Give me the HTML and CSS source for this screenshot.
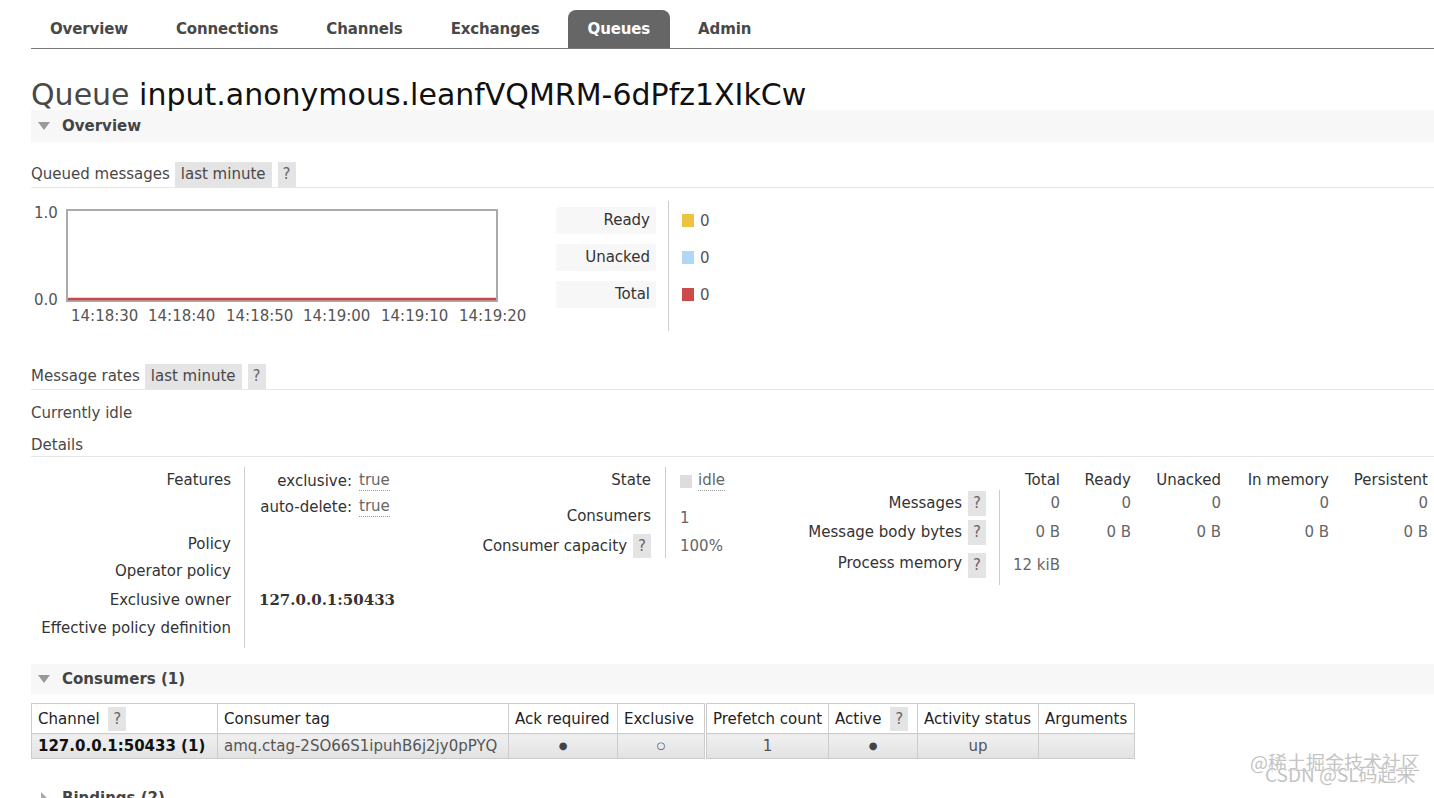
FILE: index.html
```html
<!DOCTYPE html>
<html>
<head>
<meta charset="utf-8">
<title>RabbitMQ Queue</title>
<link rel="stylesheet" href="styles.css">
</head>
<body>
<div class="page">
  <ul class="tabs">
    <li class="tab">Overview</li>
    <li class="tab">Connections</li>
    <li class="tab">Channels</li>
    <li class="tab">Exchanges</li>
    <li class="tab active">Queues</li>
    <li class="tab">Admin</li>
  </ul>

  <h1 class="title"><span class="title-kind">Queue</span> <span class="title-name">input.anonymous.leanfVQMRM-6dPfz1XIkCw</span></h1>

  <div class="section-h">
    <svg class="tri" width="12" height="8" viewBox="0 0 12 8"><polygon points="0,0 12,0 6,8" fill="#999"/></svg>
    <span>Overview</span>
  </div>

  <div class="subhead first">
    <span>Queued messages</span>
    <span class="badge">last minute</span>
    <span class="badge q">?</span>
  </div>

  <div class="chart-row">
    <svg class="chart" width="500" height="130" viewBox="0 0 500 130">
      <text x="3" y="17" class="ax">1.0</text>
      <text x="3" y="104" class="ax">0.0</text>
      <rect x="36" y="9" width="430" height="91" fill="#fff" stroke="#aaa" stroke-width="2"/>
      <line x1="37" y1="98" x2="465" y2="98" stroke="#c9484b" stroke-width="2.4"/>
      <text x="40" y="120" class="ax">14:18:30</text>
      <text x="117" y="120" class="ax">14:18:40</text>
      <text x="195" y="120" class="ax">14:18:50</text>
      <text x="272" y="120" class="ax">14:19:00</text>
      <text x="350" y="120" class="ax">14:19:10</text>
      <text x="428" y="120" class="ax">14:19:20</text>
    </svg>
    <div class="legend">
      <div class="legend-labels">
        <div class="legend-label">Ready</div>
        <div class="legend-label">Unacked</div>
        <div class="legend-label">Total</div>
      </div>
      <div class="legend-values">
        <div class="legend-value"><span class="swatch sw-ready"></span>0</div>
        <div class="legend-value"><span class="swatch sw-unacked"></span>0</div>
        <div class="legend-value"><span class="swatch sw-total"></span>0</div>
      </div>
    </div>
  </div>

  <div class="subhead rates">
    <span>Message rates</span>
    <span class="badge">last minute</span>
    <span class="badge q">?</span>
  </div>

  <div class="idle">Currently idle</div>
  <div class="details-h">Details</div>

  <div class="details">
    <div class="blk blk1">
      <div class="lbl r-feat">Features</div>
      <div class="val r-feat">
        <div class="feat"><span class="fk">exclusive:</span><span class="fv">true</span></div>
        <div class="feat second"><span class="fk">auto-delete:</span><span class="fv">true</span></div>
      </div>
      <div class="lbl r-pol">Policy</div>
      <div class="val r-pol"></div>
      <div class="lbl r-op">Operator policy</div>
      <div class="val r-op"></div>
      <div class="lbl r-own">Exclusive owner</div>
      <div class="val r-own"><span class="owner">127.0.0.1:50433</span></div>
      <div class="lbl r-eff">Effective policy definition</div>
      <div class="val r-eff"></div>
    </div>

    <div class="blk blk2">
      <div class="lbl s-state">State</div>
      <div class="val s-state"><span class="state-box"></span><span class="fv">idle</span></div>
      <div class="lbl s-cons">Consumers</div>
      <div class="val s-cons"><span class="num">1</span></div>
      <div class="lbl s-cap">Consumer capacity <span class="badge q">?</span></div>
      <div class="val s-cap"><span class="num">100%</span></div>
    </div>

    <div class="blk blk3">
      <div class="h3c"></div>
      <div class="h3c col">Total</div>
      <div class="h3c col">Ready</div>
      <div class="h3c col">Unacked</div>
      <div class="h3c col">In memory</div>
      <div class="h3c col">Persistent</div>

      <div class="lbl m-row">Messages <span class="badge q">?</span></div>
      <div class="cell m-row first-col">0</div>
      <div class="cell m-row">0</div>
      <div class="cell m-row">0</div>
      <div class="cell m-row">0</div>
      <div class="cell m-row">0</div>

      <div class="lbl b-row">Message body bytes <span class="badge q">?</span></div>
      <div class="cell b-row first-col">0 B</div>
      <div class="cell b-row">0 B</div>
      <div class="cell b-row">0 B</div>
      <div class="cell b-row">0 B</div>
      <div class="cell b-row">0 B</div>

      <div class="lbl p-row">Process memory <span class="badge q">?</span></div>
      <div class="cell p-row first-col">12 kiB</div>
      <div class="cell p-row"></div>
      <div class="cell p-row"></div>
      <div class="cell p-row"></div>
      <div class="cell p-row"></div>
    </div>
  </div>

  <div class="section-h cons-h">
    <svg class="tri" width="12" height="8" viewBox="0 0 12 8"><polygon points="0,0 12,0 6,8" fill="#999"/></svg>
    <span>Consumers (1)</span>
  </div>

  <table class="list">
    <thead>
      <tr>
        <th class="c-chan">Channel <span class="badge q">?</span></th>
        <th class="c-tag">Consumer tag</th>
        <th class="c-ack">Ack required</th>
        <th class="c-exc">Exclusive</th>
        <th class="c-pre group">Prefetch count</th>
        <th class="c-act">Active <span class="badge q">?</span></th>
        <th class="c-stat">Activity status</th>
        <th class="c-args">Arguments</th>
      </tr>
    </thead>
    <tbody>
      <tr>
        <td class="chan">127.0.0.1:50433 (1)</td>
        <td class="tag">amq.ctag-2SO66S1ipuhB6j2jy0pPYQ</td>
        <td class="ctr dot">&#9679;</td>
        <td class="ctr dot">&#9675;</td>
        <td class="ctr group">1</td>
        <td class="ctr dot">&#9679;</td>
        <td class="ctr">up</td>
        <td></td>
      </tr>
    </tbody>
  </table>

  <div class="section-h closed">
    <svg class="tri-r" width="12" height="12" viewBox="0 0 12 12"><polygon points="3,0 9,6 3,12" fill="#aaa"/></svg>
    <span>Bindings (2)</span>
  </div>
</div>

<div class="watermark">
  <div class="wm1">@稀土掘金技术社区</div>
  <div class="wm2">CSDN @SL码起来</div>
</div>
</body>
</html>
```

FILE: styles.css
```css
* { box-sizing: border-box; }
html, body { margin: 0; padding: 0; background: #fff; }
body {
  font-family: "DejaVu Sans", Verdana, sans-serif;
  font-size: 15px;
  line-height: 20px;
  color: #484848;
  overflow: hidden;
  height: 798px;
  position: relative;
}
.page { padding-left: 31px; }

/* tabs */
.tabs {
  display: flex;
  margin: 0;
  padding: 10px 0 0 0;
  list-style: none;
  border-bottom: 1px solid #777;
}
.tab {
  height: 38px;
  line-height: 39px;
  padding: 0 20px;
  margin-right: 8px;
  font-weight: bold;
  letter-spacing: -0.14px;
  color: #484848;
}
.tab:first-child { margin-left: -1px; }
.tab.active {
  background: #666;
  color: #fff;
  border-radius: 8px 8px 0 0;
}

/* title */
.title {
  margin: 29px 0 0 0;
  font-size: 30px;
  line-height: 33px;
  font-weight: normal;
  height: 32px;
}
.title-kind { color: #484848; }
.title-name { color: #111; }

/* section headers */
.section-h {
  height: 32px;
  background: #f7f7f7;
  display: flex;
  align-items: center;
  padding-left: 7px;
  font-weight: bold;
  color: #444;
}
.tri { margin-right: 12px; }
.tri-r { margin-left: 7px; margin-right: 12px; }
.section-h.cons-h { height: 30px; margin-top: 16px; }
.section-h.closed { background: #fff; margin-top: 24px; height: 30px; padding-left: 7px; }
.section-h.closed .tri-r { margin-left: 0; margin-right: 12px; }

/* subheaders */
.subhead {
  display: flex;
  align-items: stretch;
  height: 26px;
  border-bottom: 1px solid #e6e6e6;
  margin-top: 20px;
}
.subhead span { line-height: 25px; }
.subhead > span:first-child { margin-right: 5px; }
.badge {
  display: inline-block;
  background: #e4e4e4;
  padding: 0 6px;
  height: 25px;
  line-height: 25px;
  color: #484848;
}
.badge.q { padding: 0 5px; color: #666; margin-left: 6px; }
.subhead .badge.q { margin-left: 6px; }
.subhead.rates { margin-top: 33px; }

/* chart */
.chart-row {
  display: flex;
  margin-top: 13px;
}
.chart { display: block; }
.ax { font-family: "DejaVu Sans", Verdana, sans-serif; font-size: 15px; fill: #555; }
.legend {
  display: flex;
  margin-left: 25px;
}
.legend-labels {
  display: flex;
  flex-direction: column;
  gap: 10px;
  padding: 6px 0 4px 0;
}
.legend-label {
  width: 100px;
  height: 27px;
  line-height: 27px;
  background: #f7f7f7;
  border-radius: 3px;
  text-align: right;
  padding-right: 6px;
  color: #333;
}
.legend-values {
  margin-left: 12px;
  border-left: 1px solid #ccc;
  padding: 6px 0 4px 13px;
  display: flex;
  flex-direction: column;
  gap: 10px;
}
.legend-value {
  height: 27px;
  display: flex;
  align-items: center;
  color: #555;
}
.swatch {
  display: inline-block;
  width: 12px;
  height: 13px;
  margin-right: 6px;
}
.sw-ready { background: #edc240; }
.sw-unacked { background: #afd8f8; }
.sw-total { background: #cb4b4b; }

.idle { margin-top: 13px; line-height: 20px; }
.details-h {
  margin-top: 12px;
  line-height: 20px;
  padding-bottom: 1px;
  border-bottom: 1px solid #e6e6e6;
}

/* details */
.details {
  display: flex;
  align-items: flex-start;
  margin-top: 10px;
}
.blk { display: grid; align-content: start; }
.blk1 { grid-template-columns: 213px 170px; }
.blk2 { grid-template-columns: 251px 100px; }
.blk3 { grid-template-columns: 234px 61px 71px 90px 108px 99px; }

.lbl { text-align: right; padding-right: 13px; color: #333; }
.val { border-left: 1px solid #ccc; padding-left: 14px; color: #666; }

.r-feat { height: 64px; padding-top: 3px; }
.val.r-feat { padding-top: 4px; }
.feat { display: flex; line-height: 20px; }
.feat.second { margin-top: 6px; }
.fk { width: 93px; text-align: right; color: #333; margin-right: 7px; }
.fv { color: #666; border-bottom: 1px dotted #999; line-height: 18px; height: 20px; }
.r-pol { height: 26px; padding-top: 3px; }
.r-op { height: 27px; padding-top: 4px; }
.r-own { height: 30px; padding-top: 6px; }
.r-eff { height: 34px; padding-top: 4px; }
.owner {
  font-family: "DejaVu Serif", serif;
  font-weight: bold;
  color: #333;
}

.blk2 .lbl { padding-right: 14px; }
.s-state { height: 39px; padding-top: 3px; }
.val.s-state { display: flex; align-items: flex-start; padding-top: 4px; }
.state-box {
  display: inline-block;
  width: 12px;
  height: 13px;
  background: #ddd;
  margin-top: 4px;
  margin-right: 6px;
}
.s-cons { height: 28px; padding-top: 0; line-height: 20px; }
.val.s-cons { padding-top: 2px; }
.s-cap { height: 24px; display: flex; align-items: center; justify-content: flex-end; }
.val.s-cap { justify-content: flex-start; align-items: flex-start; padding-top: 2px; }
.blk2 .lbl.s-cap .badge.q { height: 24px; line-height: 24px; }

.h3c { height: 23px; padding-top: 3px; text-align: right; color: #333; }
.blk3 .lbl { display: flex; align-items: center; justify-content: flex-end; }
.blk3 .lbl .badge.q { height: 25px; line-height: 25px; }
.cell { text-align: right; color: #666; display: flex; align-items: center; justify-content: flex-end; }
.cell.first-col { border-left: 1px solid #ccc; }
.m-row { height: 26px; }
.b-row { height: 32px; }
.p-row { height: 37px; }
.blk3 .lbl.p-row { align-items: flex-start; padding-top: 5px; }
.cell.p-row { align-items: flex-start; padding-top: 7px; }

/* consumers table */
.list {
  margin-top: 9px;
  border-collapse: collapse;
  table-layout: fixed;
  width: 1103px;
}
.list th, .list td {
  border: 1px solid #ccc;
  padding: 0 6px;
  white-space: nowrap;
  overflow: hidden;
}
.list th {
  height: 30px;
  font-weight: normal;
  text-align: left;
  color: #222;
  background: #fff;
}
.list th .badge.q { margin-left: 4px; height: 24px; line-height: 24px; vertical-align: middle; }
.list td {
  height: 25px;
  background: linear-gradient(#f0f0f0, #e2e2e2);
  color: #555;
}
.c-chan { width: 186px; }
.c-tag { width: 291px; }
.c-ack { width: 109px; }
.c-exc { width: 88px; }
.c-pre { width: 123px; }
.c-act { width: 89px; }
.c-stat { width: 121px; }
.c-args { width: 96px; }
.list .group { border-left: 3px double #ccc; }
.list td.chan { font-weight: bold; color: #111; }
.list td.ctr { text-align: center; }
.list td.dot { font-size: 10px; color: #444; }

/* watermark */
.watermark {
  position: absolute;
  left: 1250px;
  top: 752px;
  font-family: "Noto Sans CJK SC", "DejaVu Sans", sans-serif;
  font-size: 19px;
  line-height: 20px;
  color: #c4c4c4;
  text-shadow: 0 0 1px #fff, 1px 1px 0 #fff;
  white-space: nowrap;
}
.wm1 { position: relative; }
.wm2 { position: relative; margin-top: -8px; margin-left: 15px; }
```
